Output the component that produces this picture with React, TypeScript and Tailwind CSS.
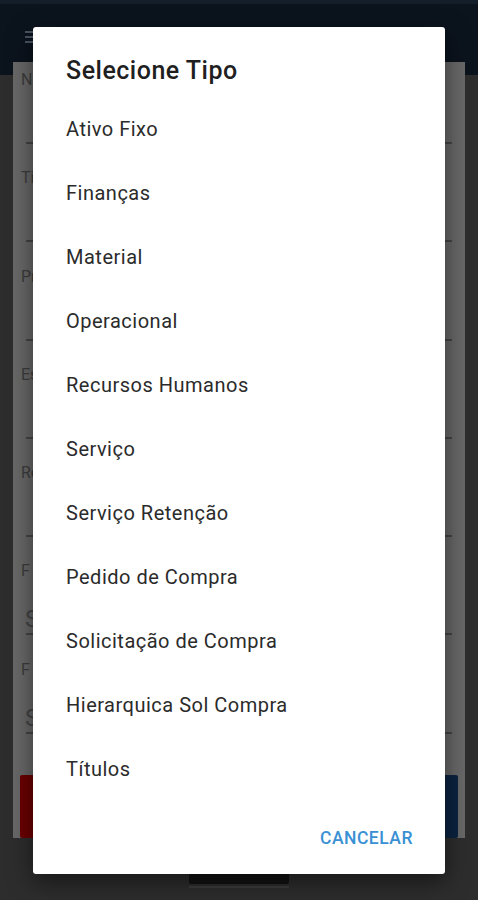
import React from "react";

const items = [
  "Ativo Fixo",
  "Finanças",
  "Material",
  "Operacional",
  "Recursos Humanos",
  "Serviço",
  "Serviço Retenção",
  "Pedido de Compra",
  "Solicitação de Compra",
  "Hierarquica Sol Compra",
  "Títulos",
];

function Field({ label, value }: { label: string; value?: string }) {
  return (
    <div className="h-[100px] flex flex-col pl-[8px] pr-[13px]">
      <div className="mt-[10px] h-[16px] text-[16px] leading-[16px] text-[#3c3c3c]">{label}</div>
      {value ? (
        <div className="mt-[26px] h-[28px] text-[24px] leading-[28px] text-[#444444] pl-[4px]">{value}</div>
      ) : (
        <div className="h-[54px]" />
      )}
      <div className="ml-[5px] h-[2px] bg-[#454545]" />
    </div>
  );
}

export default function App() {
  return (
    <div
      className="relative w-[478px] h-[900px] bg-[#2d2d2d] overflow-hidden"
      style={{ fontFamily: "Roboto, 'Noto Sans', sans-serif" }}
    >
      {/* top bar */}
      <div className="h-[75px] bg-[#0b131d] border-t-[4px] border-[#141e2a] flex items-start">
        <div className="mt-[27px] ml-[25px] flex flex-col gap-[3px]">
          <div className="w-[12px] h-[2px] bg-[#4a5563]" />
          <div className="w-[12px] h-[2px] bg-[#4a5563]" />
          <div className="w-[12px] h-[2px] bg-[#4a5563]" />
        </div>
      </div>

      {/* background panel */}
      <div className="-mt-[13px] mx-[13px] h-[776px] bg-[#686868] flex flex-col">
        <Field label="N" />
        <Field label="Ti" />
        <Field label="Pr" />
        <Field label="Es" />
        <Field label="Re" />
        <Field label="F" value="S" />
        <Field label="F" value="S" />
        <div className="mt-[25px] flex gap-[8px] px-[7px]">
          <div className="flex-1 h-[63px] bg-[#6b0000] rounded-[2px]" />
          <div className="flex-1 h-[63px] bg-[#0b2340] rounded-[2px]" />
        </div>
      </div>

      {/* footer logo (mostly hidden) */}
      <div className="mt-[26px] flex flex-col items-center">
        <div className="w-[100px] h-[20px] bg-[#121212] rounded-[2px]" />
        <div className="mt-[2px] w-[100px] h-[2px] bg-[#3c3c3c]" />
      </div>

      {/* dialog */}
      <div className="absolute left-[33px] top-[27px] w-[412px] h-[847px] bg-white rounded-[3px] shadow-[0_8px_24px_rgba(0,0,0,0.5)] flex flex-col">
        <div className="mt-[29px] pl-[33px] h-[30px] text-[25px] leading-[30px] font-medium tracking-[0.5px] text-[#1f1f1f]">
          Selecione Tipo
        </div>
        <div className="mt-[11px] flex flex-col">
          {items.map((it) => (
            <div
              key={it}
              className="h-[64px] flex items-center pl-[33px] text-[20px] tracking-[0.5px] text-[#2b2b2b]"
            >
              {it}
            </div>
          ))}
        </div>
        <div className="mt-[19px] flex justify-end pr-[32px]">
          <div className="h-[36px] flex items-center text-[17.5px] font-medium tracking-[0.5px] text-[#3a90d4]">
            CANCELAR
          </div>
        </div>
      </div>
    </div>
  );
}
